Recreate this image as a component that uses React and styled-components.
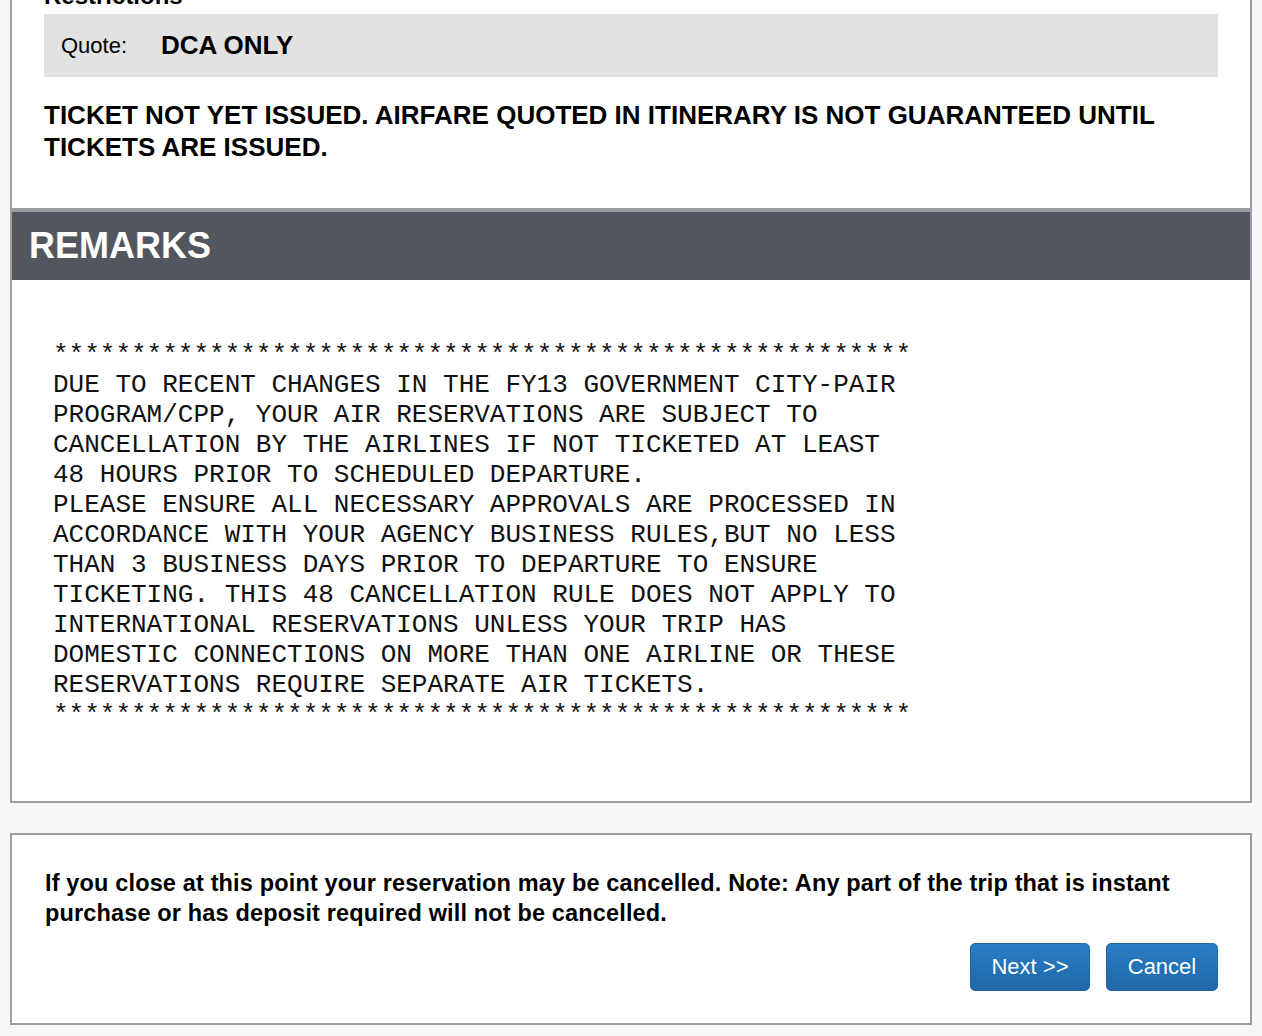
import React from "react";
import styled, { createGlobalStyle } from "styled-components";

const Global = createGlobalStyle`
  html, body { margin: 0; padding: 0; background: #f7f7f7; }
  body { font-family: "Liberation Sans", Arial, Helvetica, sans-serif; color: #000; overflow: hidden; }
`;

const Page = styled.div`
  padding: 0 10px 40px;
  margin-top: -40px;
`;

const Panel = styled.section`
  background: #fff;
  border: 2px solid #9c9ea1;
  margin-top: ${(p) => p.$gap || 0}px;
`;

const Section = styled.div`
  padding: ${(p) => p.$pad};
`;

const Heading = styled.h3`
  margin: 0 0 4px;
  font-size: 24px;
  line-height: 28px;
  font-weight: bold;
`;

const QuoteBox = styled.div`
  background: #e1e2e1;
  height: 63px;
  display: flex;
  align-items: center;
  padding-left: 17px;
`;

const QuoteLabel = styled.span`
  font-size: 22px;
  width: 100px;
`;

const QuoteValue = styled.span`
  font-size: 26px;
  font-weight: bold;
`;

const Notice = styled.p`
  margin: 22px 0 0;
  font-size: 26px;
  line-height: 32px;
  font-weight: bold;
`;

const SectionBar = styled.h2`
  margin: 45px 0 0;
  border-top: 4px solid #9a9ca0;
  background: #52565e;
  color: #fff;
  height: 68px;
  display: flex;
  align-items: center;
  padding-left: 17px;
  font-size: 36px;
  font-weight: bold;
`;

const Remarks = styled.pre`
  margin: 0;
  padding: 60px 0 71px 41px;
  font-family: "Liberation Mono", "Courier New", monospace;
  font-size: 26px;
  line-height: 30px;
  color: #111;
`;

const Warning = styled.p`
  margin: 0;
  font-size: 23.5px;
  line-height: 30px;
  font-weight: bold;
  letter-spacing: 0.15px;
`;

const Actions = styled.div`
  display: flex;
  justify-content: flex-end;
  gap: 16px;
  margin-top: 15px;
`;

const Button = styled.button`
  height: 48px;
  width: ${(p) => p.$w}px;
  border: 1px solid #1f65a3;
  border-radius: 5px;
  background: linear-gradient(#2a7dc4, #1f68a9);
  color: #fff;
  font-family: "Liberation Sans", Arial, sans-serif;
  font-size: 22px;
  cursor: pointer;
  padding: 0;
`;

const remarks = `*******************************************************
DUE TO RECENT CHANGES IN THE FY13 GOVERNMENT CITY-PAIR
PROGRAM/CPP, YOUR AIR RESERVATIONS ARE SUBJECT TO
CANCELLATION BY THE AIRLINES IF NOT TICKETED AT LEAST
48 HOURS PRIOR TO SCHEDULED DEPARTURE.
PLEASE ENSURE ALL NECESSARY APPROVALS ARE PROCESSED IN
ACCORDANCE WITH YOUR AGENCY BUSINESS RULES,BUT NO LESS
THAN 3 BUSINESS DAYS PRIOR TO DEPARTURE TO ENSURE
TICKETING. THIS 48 CANCELLATION RULE DOES NOT APPLY TO
INTERNATIONAL RESERVATIONS UNLESS YOUR TRIP HAS
DOMESTIC CONNECTIONS ON MORE THAN ONE AIRLINE OR THESE
RESERVATIONS REQUIRE SEPARATE AIR TICKETS.
*******************************************************`;

export default function App() {
  return (
    <>
      <Global />
      <Page>
        <Panel>
          <Section $pad="20px 32px 0">
            <Heading>Restrictions</Heading>
            <QuoteBox>
              <QuoteLabel>Quote:</QuoteLabel>
              <QuoteValue>DCA ONLY</QuoteValue>
            </QuoteBox>
            <Notice>
              TICKET NOT YET ISSUED. AIRFARE QUOTED IN ITINERARY IS NOT GUARANTEED UNTIL TICKETS ARE ISSUED.
            </Notice>
          </Section>
          <SectionBar>REMARKS</SectionBar>
          <Remarks>{remarks}</Remarks>
        </Panel>
        <Panel $gap={30}>
          <Section $pad="33px 32px 32px 33px">
            <Warning>
              If you close at this point your reservation may be cancelled. Note: Any part of the trip that is instant
              purchase or has deposit required will not be cancelled.
            </Warning>
            <Actions>
              <Button $w={120}>Next &gt;&gt;</Button>
              <Button $w={112}>Cancel</Button>
            </Actions>
          </Section>
        </Panel>
      </Page>
    </>
  );
}
